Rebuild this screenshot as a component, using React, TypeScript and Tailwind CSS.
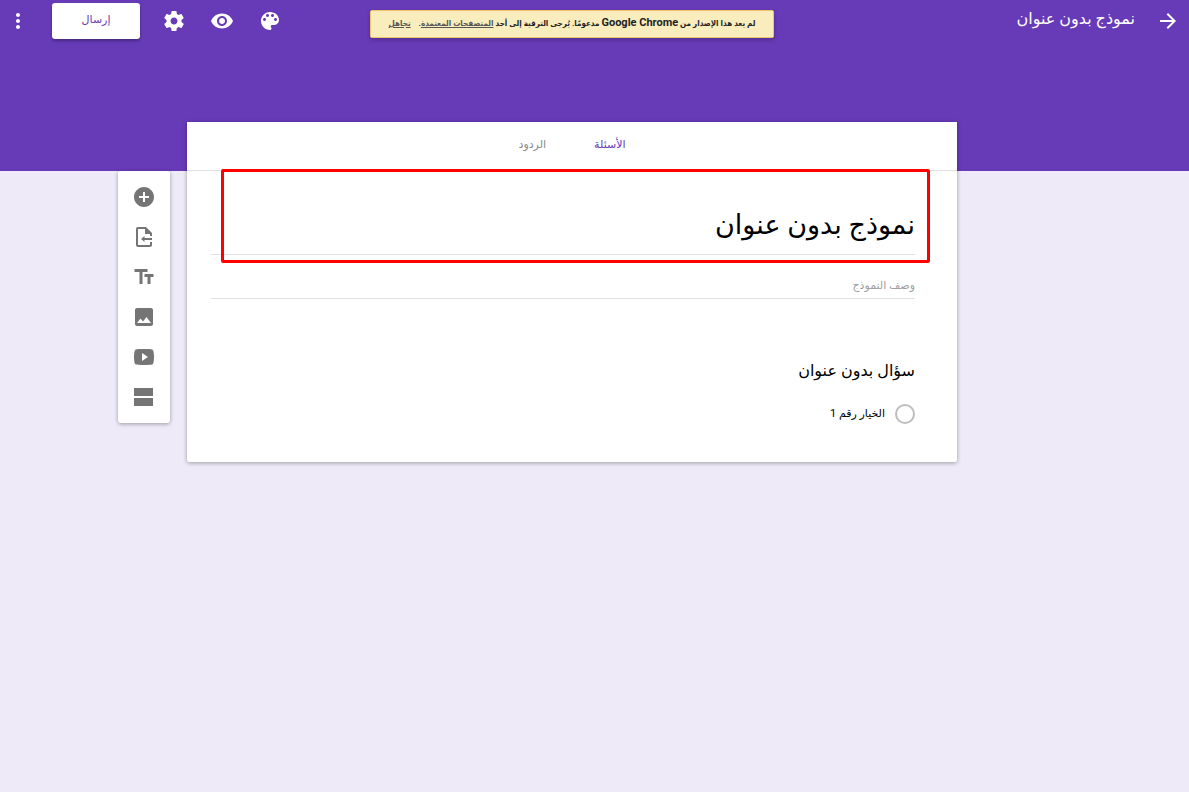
import React from 'react';

const icons = {
  more: 'M12 8c1.1 0 2-.9 2-2s-.9-2-2-2-2 .9-2 2 .9 2 2 2zm0 2c-1.1 0-2 .9-2 2s.9 2 2 2 2-.9 2-2-.9-2-2-2zm0 6c-1.1 0-2 .9-2 2s.9 2 2 2 2-.9 2-2-.9-2-2-2z',
  settings:
    'M19.43 12.98c.04-.32.07-.64.07-.98s-.03-.66-.07-.98l2.11-1.65c.19-.15.24-.42.12-.64l-2-3.46c-.12-.22-.39-.3-.61-.22l-2.49 1c-.52-.4-1.08-.73-1.69-.98l-.38-2.65C14.46 2.18 14.25 2 14 2h-4c-.25 0-.46.18-.49.42l-.38 2.65c-.61.25-1.17.59-1.69.98l-2.49-1c-.23-.09-.49 0-.61.22l-2 3.46c-.13.22-.07.49.12.64l2.11 1.65c-.04.32-.07.65-.07.98s.03.66.07.98l-2.11 1.65c-.19.15-.24.42-.12.64l2 3.46c.12.22.39.3.61.22l2.49-1c.52.4 1.08.73 1.69.98l.38 2.65c.03.24.24.42.49.42h4c.25 0 .46-.18.49-.42l.38-2.65c.61-.25 1.17-.59 1.69-.98l2.49 1c.23.09.49 0 .61-.22l2-3.46c.12-.22.07-.49-.12-.64l-2.11-1.65zM12 15.5c-1.93 0-3.5-1.57-3.5-3.5s1.57-3.5 3.5-3.5 3.5 1.57 3.5 3.5-1.57 3.5-3.5 3.5z',
  preview:
    'M12 4.5C7 4.5 2.73 7.61 1 12c1.73 4.39 6 7.5 11 7.5s9.27-3.11 11-7.5c-1.73-4.39-6-7.5-11-7.5zM12 17c-2.76 0-5-2.24-5-5s2.24-5 5-5 5 2.24 5 5-2.24 5-5 5zm0-8c-1.66 0-3 1.34-3 3s1.34 3 3 3 3-1.34 3-3-1.34-3-3-3z',
  palette:
    'M12 3c-4.97 0-9 4.03-9 9s4.03 9 9 9c.83 0 1.5-.67 1.5-1.5 0-.39-.15-.74-.39-1.01-.23-.26-.38-.61-.38-.99 0-.83.67-1.5 1.5-1.5H16c2.76 0 5-2.24 5-5 0-4.42-4.03-8-9-8zm-5.5 9c-.83 0-1.5-.67-1.5-1.5S5.67 9 6.5 9 8 9.67 8 10.5 7.33 12 6.5 12zm3-4C8.67 8 8 7.33 8 6.5S8.67 5 9.5 5s1.5.67 1.5 1.5S10.33 8 9.5 8zm5 0c-.83 0-1.5-.67-1.5-1.5S13.67 5 14.5 5s1.5.67 1.5 1.5S15.33 8 14.5 8zm3 4c-.83 0-1.5-.67-1.5-1.5S16.67 9 17.5 9s1.5.67 1.5 1.5-.67 1.5-1.5 1.5z',
  back: 'M12 4l-1.41 1.41L16.17 11H4v2h12.17l-5.58 5.59L12 20l8-8z',
  add: 'M12 2C6.48 2 2 6.48 2 12s4.48 10 10 10 10-4.48 10-10S17.52 2 12 2zm5 11h-4v4h-2v-4H7v-2h4V7h2v4h4v2z',
  importFile:
    'M14 2H6c-1.1 0-2 .9-2 2v16c0 1.1.9 2 2 2h12c1.1 0 2-.9 2-2v-3h-2v3H6V4h7v5h5v2h2V8l-6-6zM12.5 11L9 14l3.500 3v-2H20v-2h-7.500z',
  text: 'M2.5 4v3h5v12h3V7h5V4h-13zm19 5h-9v3h3v7h3v-7h3V9z',
  image:
    'M21 19V5c0-1.1-.9-2-2-2H5c-1.1 0-2 .9-2 2v14c0 1.1.9 2 2 2h14c1.1 0 2-.9 2-2zM8.5 13.5l2.5 3.01L14.5 12l4.5 6H5l3.5-4.5z',
  video:
    'M12 4C7.5 4 4.9 4.1 3.8 4.4 2.6 4.8 2 7.5 2 12s.6 7.2 1.8 7.6C4.9 19.9 7.5 20 12 20s7.1-.1 8.2-.4C21.4 19.2 22 16.5 22 12s-.6-7.2-1.8-7.6C19.1 4.1 16.5 4 12 4zM10 8l6 4-6 4z',
  section: 'M2 3h19v8H2zM2 13h19v8H2z',
};

type IconName = keyof typeof icons;

const headerActions: { icon: IconName; label: string }[] = [
  { icon: 'palette', label: 'لوحة الألوان' },
  { icon: 'preview', label: 'معاينة' },
  { icon: 'settings', label: 'الإعدادات' },
];

const tools: { icon: IconName; label: string }[] = [
  { icon: 'add', label: 'إضافة سؤال' },
  { icon: 'importFile', label: 'استيراد أسئلة' },
  { icon: 'text', label: 'إضافة عنوان ووصف' },
  { icon: 'image', label: 'إضافة صورة' },
  { icon: 'video', label: 'إضافة فيديو' },
  { icon: 'section', label: 'إضافة قسم' },
];

function IconButton({ icon, label }: { icon: IconName; label: string }) {
  return (
    <button type="button" aria-label={label} className="block size-6 shrink-0 cursor-pointer">
      <svg viewBox="0 0 24 24" fill="currentColor" fillRule="evenodd" className="size-6">
        <path d={icons[icon]} />
      </svg>
    </button>
  );
}

export default function App() {
  return (
    <div
      dir="rtl"
      className="min-h-screen bg-[#eeeaf8] font-[Roboto,'DejaVu_Sans',sans-serif] text-black"
    >
      {/* Header */}
      <header className="h-[171px] bg-[#673ab7] text-white">
        <div className="flex h-[42px] items-center justify-between pl-1.5 pr-[9px]">
          <div className="flex items-center gap-[21px]">
            <IconButton icon="back" label="رجوع" />
            <span className="pb-1 text-base leading-6">نموذج بدون عنوان</span>
          </div>
          <div className="flex items-center gap-[22px]">
            <div className="flex gap-6">
              {headerActions.map((a) => (
                <IconButton key={a.icon} icon={a.icon} label={a.label} />
              ))}
            </div>
            <button
              type="button"
              className="h-9 w-[88px] rounded-[3px] bg-white pb-0.5 text-[11px] text-[#673ab7] shadow-[0_2px_3px_rgba(0,0,0,0.3)]"
            >
              إرسال
            </button>
            <IconButton icon="more" label="المزيد" />
          </div>
        </div>
      </header>

      {/* Browser notice */}
      <div className="pointer-events-none absolute inset-x-0 top-2.5 mr-[45px] flex justify-center">
        <p className="pointer-events-auto flex h-7 items-center whitespace-nowrap rounded-[2px] border border-[#f0c36d] bg-[#f9edbe] px-[18px] pb-0.5 font-[Roboto,'DejaVu_Sans_Condensed','DejaVu_Sans',sans-serif] text-[8px] font-bold text-[#222] shadow-[0_2px_4px_rgba(0,0,0,0.2)]">
          <span>
            لم يعد هذا الإصدار من <span className="text-[11px]">Google Chrome</span> مدعومًا. يُرجى الترقية إلى أحد{' '}
            <a href="#browsers" className="text-[#555] underline">المتصفحات المعتمدة</a>.{' '}
            <a href="#dismiss" className="mr-1.5 text-[#555] underline">تجاهل</a>
          </span>
        </p>
      </div>

      <main className="-mt-[49px] flex items-start justify-center gap-[17px] pr-[114px]">
        {/* Form card */}
        <div className="relative w-[770px] rounded-b-[2px] bg-white pb-[38px] shadow-[0_1px_4px_rgba(0,0,0,0.35)]">
          <nav className="flex h-[49px] justify-center gap-12 border-b border-[#e0e0e0] text-[11px] leading-[46px]">
            <a href="#questions" className="text-[#673ab7]">الأسئلة</a>
            <a href="#responses" className="text-[#8a8a8a]">الردود</a>
          </nav>

          <form className="pl-6 pr-[42px]">
            <input
              aria-label="عنوان النموذج"
              defaultValue="نموذج بدون عنوان"
              className="mt-7 block h-14 w-full border-b border-[#e0e0e0] bg-transparent pb-1 text-[27px] outline-none"
            />
            <input
              aria-label="وصف النموذج"
              placeholder="وصف النموذج"
              className="mt-5 block h-6 w-full border-b border-[#e0e0e0] bg-transparent pb-0.5 text-[11px] outline-none placeholder:text-[#a0a0a0]"
            />

            <fieldset className="mt-14">
              <legend className="text-base leading-8">سؤال بدون عنوان</legend>
              <label className="mt-[17px] flex items-center gap-2.5 text-[11px] leading-5">
                <input
                  type="radio"
                  name="option"
                  className="size-5 appearance-none rounded-full border-2 border-[#bdbdbd]"
                />
                الخيار رقم 1
              </label>
            </fieldset>
          </form>

          {/* Highlight around the title field */}
          <div className="pointer-events-none absolute top-[47px] right-[27px] left-[34px] h-[94px] rounded-[2px] border-3 border-[#f00]" />
        </div>

        {/* Side toolbar */}
        <aside className="mt-[49px] flex w-[52px] flex-col items-center gap-4 rounded-[3px] bg-white py-3.5 text-[#757575] shadow-[0_1px_4px_rgba(0,0,0,0.35)]">
          {tools.map((t) => (
            <IconButton key={t.icon} icon={t.icon} label={t.label} />
          ))}
        </aside>
      </main>
    </div>
  );
}
